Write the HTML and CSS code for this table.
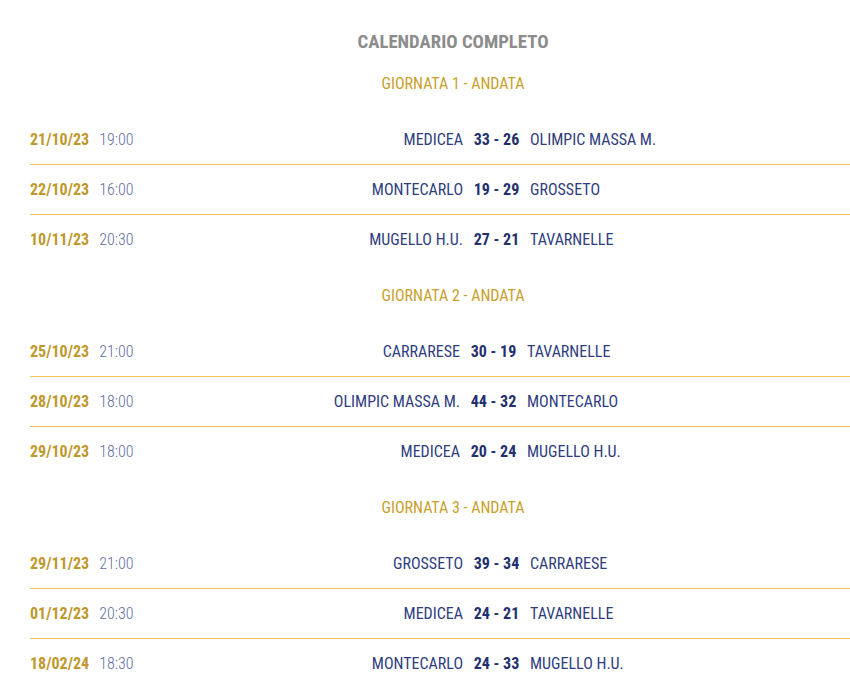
FILE: index.html
```html
<!DOCTYPE html>
<html lang="it">
<head>
<meta charset="utf-8">
<title>Calendario completo</title>
<link rel="stylesheet" href="styles.css">
</head>
<body>
<div class="page">
  <h2 class="title">CALENDARIO COMPLETO</h2>

  <div class="round">GIORNATA 1 - ANDATA</div>
  <div class="group g1">
    <div class="row"><div class="when"><span class="date">21/10/23</span><span class="time">19:00</span></div><div class="home">MEDICEA</div><div class="score">33 - 26</div><div class="away">OLIMPIC MASSA M.</div></div>
    <div class="row"><div class="when"><span class="date">22/10/23</span><span class="time">16:00</span></div><div class="home">MONTECARLO</div><div class="score">19 - 29</div><div class="away">GROSSETO</div></div>
    <div class="row"><div class="when"><span class="date">10/11/23</span><span class="time">20:30</span></div><div class="home">MUGELLO H.U.</div><div class="score">27 - 21</div><div class="away">TAVARNELLE</div></div>
  </div>

  <div class="round">GIORNATA 2 - ANDATA</div>
  <div class="group g2">
    <div class="row"><div class="when"><span class="date">25/10/23</span><span class="time">21:00</span></div><div class="home">CARRARESE</div><div class="score">30 - 19</div><div class="away">TAVARNELLE</div></div>
    <div class="row"><div class="when"><span class="date">28/10/23</span><span class="time">18:00</span></div><div class="home">OLIMPIC MASSA M.</div><div class="score">44 - 32</div><div class="away">MONTECARLO</div></div>
    <div class="row"><div class="when"><span class="date">29/10/23</span><span class="time">18:00</span></div><div class="home">MEDICEA</div><div class="score">20 - 24</div><div class="away">MUGELLO H.U.</div></div>
  </div>

  <div class="round">GIORNATA 3 - ANDATA</div>
  <div class="group g1">
    <div class="row"><div class="when"><span class="date">29/11/23</span><span class="time">21:00</span></div><div class="home">GROSSETO</div><div class="score">39 - 34</div><div class="away">CARRARESE</div></div>
    <div class="row"><div class="when"><span class="date">01/12/23</span><span class="time">20:30</span></div><div class="home">MEDICEA</div><div class="score">24 - 21</div><div class="away">TAVARNELLE</div></div>
    <div class="row"><div class="when"><span class="date">18/02/24</span><span class="time">18:30</span></div><div class="home">MONTECARLO</div><div class="score">24 - 33</div><div class="away">MUGELLO H.U.</div></div>
  </div>
</div>
</body>
</html>
```

FILE: styles.css
```css
html, body {
  margin: 0;
  padding: 0;
  background: #ffffff;
  overflow: hidden;
}

body {
  font-family: "Roboto Condensed", "Liberation Sans Narrow", Roboto, sans-serif;
  font-size: 16px;
}

.page {
  width: 846px;
  padding-left: 30px;
}

.title {
  margin: 0;
  padding-top: 31px;
  line-height: 22px;
  font-size: 18.8px;
  font-weight: 700;
  color: #8c8c8c;
  text-align: center;
}

.round {
  height: 62px;
  padding-top: 1px;
  box-sizing: border-box;
  line-height: 60px;
  text-align: center;
  color: #c9a02c;
  font-size: 16px;
}

.group .row {
  display: grid;
  align-items: center;
  height: 50px;
  border-bottom: 1px solid #eec455;
  box-sizing: border-box;
}

.group .row:last-child {
  border-bottom-color: transparent;
}

.g1 .row {
  grid-template-columns: 140px 293px 67px 1fr;
}

.g2 .row {
  grid-template-columns: 140px 290px 67px 1fr;
}

.when {
  display: flex;
  gap: 10px;
  white-space: nowrap;
}

.date {
  font-weight: 700;
  color: #bf982b;
}

.time {
  font-weight: 300;
  color: #5f6da3;
}

.home {
  text-align: right;
  color: #2f3d80;
}

.score {
  text-align: center;
  font-weight: 700;
  color: #23306e;
}

.away {
  color: #2f3d80;
}
```
